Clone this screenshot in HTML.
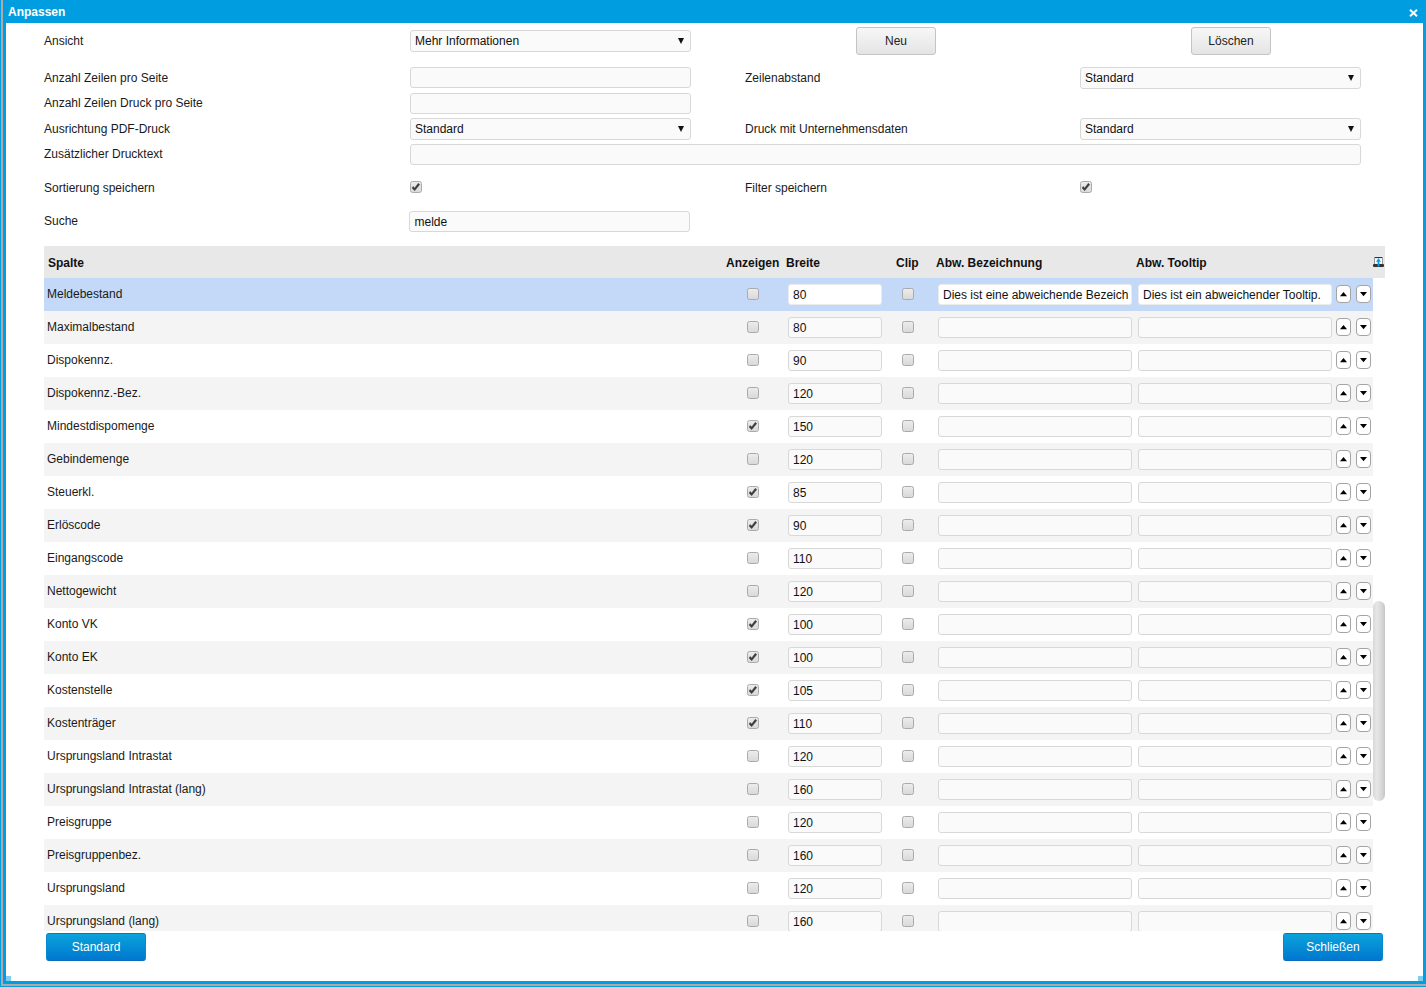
<!DOCTYPE html><html><head><meta charset="utf-8"><style>
*{box-sizing:border-box;margin:0;padding:0}
html,body{width:1426px;height:987px;overflow:hidden;background:#009ee0}
body{position:relative;font-family:"Liberation Sans",sans-serif;font-size:12px;color:#1a1a1a}
.a{position:absolute;white-space:nowrap}
.frameL{position:absolute;left:1px;top:0;width:2px;height:986px;background:#b3a8a4}
.frameB{position:absolute;left:1px;top:984px;width:1425px;height:2px;background:#b3a8a4}
.content{position:absolute;left:6px;top:23px;width:1417px;height:958px;background:#fff}
.title{position:absolute;left:8px;top:5px;color:#fff;font-weight:bold;font-size:12px;line-height:15px}
.lbl{position:absolute;white-space:nowrap;line-height:14px}
.inp{position:absolute;border:1px solid #d8d8d8;border-radius:3px;background:#fafafa;height:21px}
.sel{position:absolute;border:1px solid #d8d8d8;border-radius:3px;background:#fafafa;height:22px}
.sel span{position:absolute;left:4px;top:3px;line-height:14px;color:#111}
.sel i{position:absolute;right:6px;top:7px;width:0;height:0;border-left:3.5px solid transparent;border-right:3.5px solid transparent;border-top:6px solid #111}
.btn{position:absolute;height:28px;width:80px;border:1px solid #c4c4c4;border-radius:3px;background:linear-gradient(#f7f7f7,#e4e4e4);text-align:center;line-height:26px;color:#222}
.bbtn{position:absolute;height:28px;width:100px;border-radius:3px;border:1px solid #0a88cf;border-top-color:#0a74c2;border-bottom-color:#0a6cc0;background:linear-gradient(#0aa3dc,#0077cf);text-align:center;line-height:26px;color:#fff}
.cb{position:absolute;width:12px;height:12px;border:1px solid #aaaaaa;border-radius:2.5px;background:linear-gradient(#ececec,#d9d9d9)}
.row{position:absolute;left:44px;width:1329px;height:33px}
.ti{position:absolute;height:21px;border:1px solid #d8d8d8;border-radius:3px;background:#fafafa}
.ti span{position:absolute;left:4px;top:3px;line-height:14px;color:#111}
.ud{position:absolute;width:15px;height:18px;border:1px solid #a4a4a4;border-radius:4px;background:#fff}
.up{position:absolute;left:2.5px;top:5.5px;width:0;height:0;border-left:4px solid transparent;border-right:4px solid transparent;border-bottom:4.5px solid #000}
.dn{position:absolute;left:2.5px;top:5.5px;width:0;height:0;border-left:4px solid transparent;border-right:4px solid transparent;border-top:4.5px solid #000}
.hdr{position:absolute;left:44px;top:246px;width:1341px;height:32px;background:#e8e8e8}
.hdr b{position:absolute;top:10px;line-height:14px;color:#111}
</style></head><body>
<div class="frameL"></div><div class="frameB"></div>
<div class="title">Anpassen</div>
<svg class="a" style="left:1409px;top:9px" width="9" height="8" viewBox="0 0 9 8"><path d="M1 0.8 L8 7.2 M8 0.8 L1 7.2" stroke="#fff" stroke-width="2"/></svg>
<div class="content"></div>
<div class="a" style="left:6px;top:976px;width:5px;height:5px;background:#7fcdf0"></div>
<div class="a" style="left:1418px;top:976px;width:5px;height:5px;background:#7fcdf0"></div>
<div class="lbl" style="left:44px;top:34px">Ansicht</div>
<div class="sel" style="left:410px;top:30px;width:281px"><span>Mehr Informationen</span><i></i></div>
<div class="btn" style="left:856px;top:27px">Neu</div>
<div class="btn" style="left:1191px;top:27px">Löschen</div>
<div class="lbl" style="left:44px;top:71px">Anzahl Zeilen pro Seite</div>
<div class="inp" style="left:410px;top:67px;width:281px"></div>
<div class="lbl" style="left:745px;top:71px">Zeilenabstand</div>
<div class="sel" style="left:1080px;top:67px;width:281px"><span>Standard</span><i></i></div>
<div class="lbl" style="left:44px;top:96px">Anzahl Zeilen Druck pro Seite</div>
<div class="inp" style="left:410px;top:93px;width:281px"></div>
<div class="lbl" style="left:44px;top:122px">Ausrichtung PDF-Druck</div>
<div class="sel" style="left:410px;top:118px;width:281px"><span>Standard</span><i></i></div>
<div class="lbl" style="left:745px;top:122px">Druck mit Unternehmensdaten</div>
<div class="sel" style="left:1080px;top:118px;width:281px"><span>Standard</span><i></i></div>
<div class="lbl" style="left:44px;top:147px">Zusätzlicher Drucktext</div>
<div class="inp" style="left:410px;top:144px;width:951px"></div>
<div class="lbl" style="left:44px;top:181px">Sortierung speichern</div>
<div class="cb" style="left:410px;top:181px"><svg width="12" height="12" viewBox="0 0 12 12" style="position:absolute;left:-1px;top:-1px"><path d="M3.2 5.4 L4.66 7.0 L8.3 2.2 L9.8 3.5 L4.66 9.7 L2.0 7.0 Z" fill="#3c3c3c" stroke="#3c3c3c" stroke-width="0.4" stroke-linejoin="round"/></svg></div>
<div class="lbl" style="left:745px;top:181px">Filter speichern</div>
<div class="cb" style="left:1080px;top:181px"><svg width="12" height="12" viewBox="0 0 12 12" style="position:absolute;left:-1px;top:-1px"><path d="M3.2 5.4 L4.66 7.0 L8.3 2.2 L9.8 3.5 L4.66 9.7 L2.0 7.0 Z" fill="#3c3c3c" stroke="#3c3c3c" stroke-width="0.4" stroke-linejoin="round"/></svg></div>
<div class="lbl" style="left:44px;top:214px">Suche</div>
<div class="ti" style="left:409px;top:211px;width:281px;height:21px"><span style="left:4.5px;top:3px">melde</span></div>
<div class="hdr"><b style="left:4px">Spalte</b><b style="left:682px">Anzeigen</b><b style="left:742px">Breite</b><b style="left:852px">Clip</b><b style="left:892px">Abw. Bezeichnung</b><b style="left:1092px">Abw. Tooltip</b></div>
<svg class="a" style="left:1373px;top:257px" width="11" height="10" viewBox="0 0 11 10"><rect x="1" y="0" width="9" height="1.3" fill="#333"/><rect x="1" y="0" width="1" height="7" fill="#999"/><rect x="9" y="0" width="1" height="7" fill="#999"/><rect x="2" y="1.3" width="7" height="5" fill="#fff"/><rect x="0" y="7" width="11" height="3" rx="1" fill="#333"/><path d="M5.5 0.9 L8 4.8 L6.4 4.8 L6.4 9.5 L4.6 9.5 L4.6 4.8 L3 4.8 Z" fill="#0aa0e8"/></svg>
<div class="a" style="left:44px;top:278px;width:1341px;height:653px;overflow:hidden">
<div class="row" style="left:0;top:0px;background:#c4d9f7"><div class="lbl" style="left:3px;top:9px">Meldebestand</div><div class="cb" style="left:703px;top:10px"></div><div class="ti" style="left:744px;top:6px;width:94px;background:#fff;border-color:#ebebeb"><span>80</span></div><div class="cb" style="left:858px;top:10px"></div><div class="ti" style="left:894px;top:6px;width:194px;background:#fff;border-color:#ebebeb"><span>Dies ist eine abweichende Bezeich</span></div><div class="ti" style="left:1094px;top:6px;width:194px;background:#fff;border-color:#ebebeb"><span>Dies ist ein abweichender Tooltip.</span></div><div class="ud" style="left:1292px;top:7px"><svg width="15" height="18" style="position:absolute;left:-1px;top:-1px"><path d="M4 11.2 L11 11.2 L7.5 6.9 Z" fill="#000"/></svg></div><div class="ud" style="left:1312px;top:7px"><svg width="15" height="18" style="position:absolute;left:-1px;top:-1px"><path d="M4 6.9 L11 6.9 L7.5 11.2 Z" fill="#000"/></svg></div></div>
<div class="row" style="left:0;top:33px;background:#f4f4f4"><div class="lbl" style="left:3px;top:9px">Maximalbestand</div><div class="cb" style="left:703px;top:10px"></div><div class="ti" style="left:744px;top:6px;width:94px;"><span>80</span></div><div class="cb" style="left:858px;top:10px"></div><div class="ti" style="left:894px;top:6px;width:194px;"><span></span></div><div class="ti" style="left:1094px;top:6px;width:194px;"><span></span></div><div class="ud" style="left:1292px;top:7px"><svg width="15" height="18" style="position:absolute;left:-1px;top:-1px"><path d="M4 11.2 L11 11.2 L7.5 6.9 Z" fill="#000"/></svg></div><div class="ud" style="left:1312px;top:7px"><svg width="15" height="18" style="position:absolute;left:-1px;top:-1px"><path d="M4 6.9 L11 6.9 L7.5 11.2 Z" fill="#000"/></svg></div></div>
<div class="row" style="left:0;top:66px;background:#fff"><div class="lbl" style="left:3px;top:9px">Dispokennz.</div><div class="cb" style="left:703px;top:10px"></div><div class="ti" style="left:744px;top:6px;width:94px;"><span>90</span></div><div class="cb" style="left:858px;top:10px"></div><div class="ti" style="left:894px;top:6px;width:194px;"><span></span></div><div class="ti" style="left:1094px;top:6px;width:194px;"><span></span></div><div class="ud" style="left:1292px;top:7px"><svg width="15" height="18" style="position:absolute;left:-1px;top:-1px"><path d="M4 11.2 L11 11.2 L7.5 6.9 Z" fill="#000"/></svg></div><div class="ud" style="left:1312px;top:7px"><svg width="15" height="18" style="position:absolute;left:-1px;top:-1px"><path d="M4 6.9 L11 6.9 L7.5 11.2 Z" fill="#000"/></svg></div></div>
<div class="row" style="left:0;top:99px;background:#f4f4f4"><div class="lbl" style="left:3px;top:9px">Dispokennz.-Bez.</div><div class="cb" style="left:703px;top:10px"></div><div class="ti" style="left:744px;top:6px;width:94px;"><span>120</span></div><div class="cb" style="left:858px;top:10px"></div><div class="ti" style="left:894px;top:6px;width:194px;"><span></span></div><div class="ti" style="left:1094px;top:6px;width:194px;"><span></span></div><div class="ud" style="left:1292px;top:7px"><svg width="15" height="18" style="position:absolute;left:-1px;top:-1px"><path d="M4 11.2 L11 11.2 L7.5 6.9 Z" fill="#000"/></svg></div><div class="ud" style="left:1312px;top:7px"><svg width="15" height="18" style="position:absolute;left:-1px;top:-1px"><path d="M4 6.9 L11 6.9 L7.5 11.2 Z" fill="#000"/></svg></div></div>
<div class="row" style="left:0;top:132px;background:#fff"><div class="lbl" style="left:3px;top:9px">Mindestdispomenge</div><div class="cb" style="left:703px;top:10px"><svg width="12" height="12" viewBox="0 0 12 12" style="position:absolute;left:-1px;top:-1px"><path d="M3.2 5.4 L4.66 7.0 L8.3 2.2 L9.8 3.5 L4.66 9.7 L2.0 7.0 Z" fill="#3c3c3c" stroke="#3c3c3c" stroke-width="0.4" stroke-linejoin="round"/></svg></div><div class="ti" style="left:744px;top:6px;width:94px;"><span>150</span></div><div class="cb" style="left:858px;top:10px"></div><div class="ti" style="left:894px;top:6px;width:194px;"><span></span></div><div class="ti" style="left:1094px;top:6px;width:194px;"><span></span></div><div class="ud" style="left:1292px;top:7px"><svg width="15" height="18" style="position:absolute;left:-1px;top:-1px"><path d="M4 11.2 L11 11.2 L7.5 6.9 Z" fill="#000"/></svg></div><div class="ud" style="left:1312px;top:7px"><svg width="15" height="18" style="position:absolute;left:-1px;top:-1px"><path d="M4 6.9 L11 6.9 L7.5 11.2 Z" fill="#000"/></svg></div></div>
<div class="row" style="left:0;top:165px;background:#f4f4f4"><div class="lbl" style="left:3px;top:9px">Gebindemenge</div><div class="cb" style="left:703px;top:10px"></div><div class="ti" style="left:744px;top:6px;width:94px;"><span>120</span></div><div class="cb" style="left:858px;top:10px"></div><div class="ti" style="left:894px;top:6px;width:194px;"><span></span></div><div class="ti" style="left:1094px;top:6px;width:194px;"><span></span></div><div class="ud" style="left:1292px;top:7px"><svg width="15" height="18" style="position:absolute;left:-1px;top:-1px"><path d="M4 11.2 L11 11.2 L7.5 6.9 Z" fill="#000"/></svg></div><div class="ud" style="left:1312px;top:7px"><svg width="15" height="18" style="position:absolute;left:-1px;top:-1px"><path d="M4 6.9 L11 6.9 L7.5 11.2 Z" fill="#000"/></svg></div></div>
<div class="row" style="left:0;top:198px;background:#fff"><div class="lbl" style="left:3px;top:9px">Steuerkl.</div><div class="cb" style="left:703px;top:10px"><svg width="12" height="12" viewBox="0 0 12 12" style="position:absolute;left:-1px;top:-1px"><path d="M3.2 5.4 L4.66 7.0 L8.3 2.2 L9.8 3.5 L4.66 9.7 L2.0 7.0 Z" fill="#3c3c3c" stroke="#3c3c3c" stroke-width="0.4" stroke-linejoin="round"/></svg></div><div class="ti" style="left:744px;top:6px;width:94px;"><span>85</span></div><div class="cb" style="left:858px;top:10px"></div><div class="ti" style="left:894px;top:6px;width:194px;"><span></span></div><div class="ti" style="left:1094px;top:6px;width:194px;"><span></span></div><div class="ud" style="left:1292px;top:7px"><svg width="15" height="18" style="position:absolute;left:-1px;top:-1px"><path d="M4 11.2 L11 11.2 L7.5 6.9 Z" fill="#000"/></svg></div><div class="ud" style="left:1312px;top:7px"><svg width="15" height="18" style="position:absolute;left:-1px;top:-1px"><path d="M4 6.9 L11 6.9 L7.5 11.2 Z" fill="#000"/></svg></div></div>
<div class="row" style="left:0;top:231px;background:#f4f4f4"><div class="lbl" style="left:3px;top:9px">Erlöscode</div><div class="cb" style="left:703px;top:10px"><svg width="12" height="12" viewBox="0 0 12 12" style="position:absolute;left:-1px;top:-1px"><path d="M3.2 5.4 L4.66 7.0 L8.3 2.2 L9.8 3.5 L4.66 9.7 L2.0 7.0 Z" fill="#3c3c3c" stroke="#3c3c3c" stroke-width="0.4" stroke-linejoin="round"/></svg></div><div class="ti" style="left:744px;top:6px;width:94px;"><span>90</span></div><div class="cb" style="left:858px;top:10px"></div><div class="ti" style="left:894px;top:6px;width:194px;"><span></span></div><div class="ti" style="left:1094px;top:6px;width:194px;"><span></span></div><div class="ud" style="left:1292px;top:7px"><svg width="15" height="18" style="position:absolute;left:-1px;top:-1px"><path d="M4 11.2 L11 11.2 L7.5 6.9 Z" fill="#000"/></svg></div><div class="ud" style="left:1312px;top:7px"><svg width="15" height="18" style="position:absolute;left:-1px;top:-1px"><path d="M4 6.9 L11 6.9 L7.5 11.2 Z" fill="#000"/></svg></div></div>
<div class="row" style="left:0;top:264px;background:#fff"><div class="lbl" style="left:3px;top:9px">Eingangscode</div><div class="cb" style="left:703px;top:10px"></div><div class="ti" style="left:744px;top:6px;width:94px;"><span>110</span></div><div class="cb" style="left:858px;top:10px"></div><div class="ti" style="left:894px;top:6px;width:194px;"><span></span></div><div class="ti" style="left:1094px;top:6px;width:194px;"><span></span></div><div class="ud" style="left:1292px;top:7px"><svg width="15" height="18" style="position:absolute;left:-1px;top:-1px"><path d="M4 11.2 L11 11.2 L7.5 6.9 Z" fill="#000"/></svg></div><div class="ud" style="left:1312px;top:7px"><svg width="15" height="18" style="position:absolute;left:-1px;top:-1px"><path d="M4 6.9 L11 6.9 L7.5 11.2 Z" fill="#000"/></svg></div></div>
<div class="row" style="left:0;top:297px;background:#f4f4f4"><div class="lbl" style="left:3px;top:9px">Nettogewicht</div><div class="cb" style="left:703px;top:10px"></div><div class="ti" style="left:744px;top:6px;width:94px;"><span>120</span></div><div class="cb" style="left:858px;top:10px"></div><div class="ti" style="left:894px;top:6px;width:194px;"><span></span></div><div class="ti" style="left:1094px;top:6px;width:194px;"><span></span></div><div class="ud" style="left:1292px;top:7px"><svg width="15" height="18" style="position:absolute;left:-1px;top:-1px"><path d="M4 11.2 L11 11.2 L7.5 6.9 Z" fill="#000"/></svg></div><div class="ud" style="left:1312px;top:7px"><svg width="15" height="18" style="position:absolute;left:-1px;top:-1px"><path d="M4 6.9 L11 6.9 L7.5 11.2 Z" fill="#000"/></svg></div></div>
<div class="row" style="left:0;top:330px;background:#fff"><div class="lbl" style="left:3px;top:9px">Konto VK</div><div class="cb" style="left:703px;top:10px"><svg width="12" height="12" viewBox="0 0 12 12" style="position:absolute;left:-1px;top:-1px"><path d="M3.2 5.4 L4.66 7.0 L8.3 2.2 L9.8 3.5 L4.66 9.7 L2.0 7.0 Z" fill="#3c3c3c" stroke="#3c3c3c" stroke-width="0.4" stroke-linejoin="round"/></svg></div><div class="ti" style="left:744px;top:6px;width:94px;"><span>100</span></div><div class="cb" style="left:858px;top:10px"></div><div class="ti" style="left:894px;top:6px;width:194px;"><span></span></div><div class="ti" style="left:1094px;top:6px;width:194px;"><span></span></div><div class="ud" style="left:1292px;top:7px"><svg width="15" height="18" style="position:absolute;left:-1px;top:-1px"><path d="M4 11.2 L11 11.2 L7.5 6.9 Z" fill="#000"/></svg></div><div class="ud" style="left:1312px;top:7px"><svg width="15" height="18" style="position:absolute;left:-1px;top:-1px"><path d="M4 6.9 L11 6.9 L7.5 11.2 Z" fill="#000"/></svg></div></div>
<div class="row" style="left:0;top:363px;background:#f4f4f4"><div class="lbl" style="left:3px;top:9px">Konto EK</div><div class="cb" style="left:703px;top:10px"><svg width="12" height="12" viewBox="0 0 12 12" style="position:absolute;left:-1px;top:-1px"><path d="M3.2 5.4 L4.66 7.0 L8.3 2.2 L9.8 3.5 L4.66 9.7 L2.0 7.0 Z" fill="#3c3c3c" stroke="#3c3c3c" stroke-width="0.4" stroke-linejoin="round"/></svg></div><div class="ti" style="left:744px;top:6px;width:94px;"><span>100</span></div><div class="cb" style="left:858px;top:10px"></div><div class="ti" style="left:894px;top:6px;width:194px;"><span></span></div><div class="ti" style="left:1094px;top:6px;width:194px;"><span></span></div><div class="ud" style="left:1292px;top:7px"><svg width="15" height="18" style="position:absolute;left:-1px;top:-1px"><path d="M4 11.2 L11 11.2 L7.5 6.9 Z" fill="#000"/></svg></div><div class="ud" style="left:1312px;top:7px"><svg width="15" height="18" style="position:absolute;left:-1px;top:-1px"><path d="M4 6.9 L11 6.9 L7.5 11.2 Z" fill="#000"/></svg></div></div>
<div class="row" style="left:0;top:396px;background:#fff"><div class="lbl" style="left:3px;top:9px">Kostenstelle</div><div class="cb" style="left:703px;top:10px"><svg width="12" height="12" viewBox="0 0 12 12" style="position:absolute;left:-1px;top:-1px"><path d="M3.2 5.4 L4.66 7.0 L8.3 2.2 L9.8 3.5 L4.66 9.7 L2.0 7.0 Z" fill="#3c3c3c" stroke="#3c3c3c" stroke-width="0.4" stroke-linejoin="round"/></svg></div><div class="ti" style="left:744px;top:6px;width:94px;"><span>105</span></div><div class="cb" style="left:858px;top:10px"></div><div class="ti" style="left:894px;top:6px;width:194px;"><span></span></div><div class="ti" style="left:1094px;top:6px;width:194px;"><span></span></div><div class="ud" style="left:1292px;top:7px"><svg width="15" height="18" style="position:absolute;left:-1px;top:-1px"><path d="M4 11.2 L11 11.2 L7.5 6.9 Z" fill="#000"/></svg></div><div class="ud" style="left:1312px;top:7px"><svg width="15" height="18" style="position:absolute;left:-1px;top:-1px"><path d="M4 6.9 L11 6.9 L7.5 11.2 Z" fill="#000"/></svg></div></div>
<div class="row" style="left:0;top:429px;background:#f4f4f4"><div class="lbl" style="left:3px;top:9px">Kostenträger</div><div class="cb" style="left:703px;top:10px"><svg width="12" height="12" viewBox="0 0 12 12" style="position:absolute;left:-1px;top:-1px"><path d="M3.2 5.4 L4.66 7.0 L8.3 2.2 L9.8 3.5 L4.66 9.7 L2.0 7.0 Z" fill="#3c3c3c" stroke="#3c3c3c" stroke-width="0.4" stroke-linejoin="round"/></svg></div><div class="ti" style="left:744px;top:6px;width:94px;"><span>110</span></div><div class="cb" style="left:858px;top:10px"></div><div class="ti" style="left:894px;top:6px;width:194px;"><span></span></div><div class="ti" style="left:1094px;top:6px;width:194px;"><span></span></div><div class="ud" style="left:1292px;top:7px"><svg width="15" height="18" style="position:absolute;left:-1px;top:-1px"><path d="M4 11.2 L11 11.2 L7.5 6.9 Z" fill="#000"/></svg></div><div class="ud" style="left:1312px;top:7px"><svg width="15" height="18" style="position:absolute;left:-1px;top:-1px"><path d="M4 6.9 L11 6.9 L7.5 11.2 Z" fill="#000"/></svg></div></div>
<div class="row" style="left:0;top:462px;background:#fff"><div class="lbl" style="left:3px;top:9px">Ursprungsland Intrastat</div><div class="cb" style="left:703px;top:10px"></div><div class="ti" style="left:744px;top:6px;width:94px;"><span>120</span></div><div class="cb" style="left:858px;top:10px"></div><div class="ti" style="left:894px;top:6px;width:194px;"><span></span></div><div class="ti" style="left:1094px;top:6px;width:194px;"><span></span></div><div class="ud" style="left:1292px;top:7px"><svg width="15" height="18" style="position:absolute;left:-1px;top:-1px"><path d="M4 11.2 L11 11.2 L7.5 6.9 Z" fill="#000"/></svg></div><div class="ud" style="left:1312px;top:7px"><svg width="15" height="18" style="position:absolute;left:-1px;top:-1px"><path d="M4 6.9 L11 6.9 L7.5 11.2 Z" fill="#000"/></svg></div></div>
<div class="row" style="left:0;top:495px;background:#f4f4f4"><div class="lbl" style="left:3px;top:9px">Ursprungsland Intrastat (lang)</div><div class="cb" style="left:703px;top:10px"></div><div class="ti" style="left:744px;top:6px;width:94px;"><span>160</span></div><div class="cb" style="left:858px;top:10px"></div><div class="ti" style="left:894px;top:6px;width:194px;"><span></span></div><div class="ti" style="left:1094px;top:6px;width:194px;"><span></span></div><div class="ud" style="left:1292px;top:7px"><svg width="15" height="18" style="position:absolute;left:-1px;top:-1px"><path d="M4 11.2 L11 11.2 L7.5 6.9 Z" fill="#000"/></svg></div><div class="ud" style="left:1312px;top:7px"><svg width="15" height="18" style="position:absolute;left:-1px;top:-1px"><path d="M4 6.9 L11 6.9 L7.5 11.2 Z" fill="#000"/></svg></div></div>
<div class="row" style="left:0;top:528px;background:#fff"><div class="lbl" style="left:3px;top:9px">Preisgruppe</div><div class="cb" style="left:703px;top:10px"></div><div class="ti" style="left:744px;top:6px;width:94px;"><span>120</span></div><div class="cb" style="left:858px;top:10px"></div><div class="ti" style="left:894px;top:6px;width:194px;"><span></span></div><div class="ti" style="left:1094px;top:6px;width:194px;"><span></span></div><div class="ud" style="left:1292px;top:7px"><svg width="15" height="18" style="position:absolute;left:-1px;top:-1px"><path d="M4 11.2 L11 11.2 L7.5 6.9 Z" fill="#000"/></svg></div><div class="ud" style="left:1312px;top:7px"><svg width="15" height="18" style="position:absolute;left:-1px;top:-1px"><path d="M4 6.9 L11 6.9 L7.5 11.2 Z" fill="#000"/></svg></div></div>
<div class="row" style="left:0;top:561px;background:#f4f4f4"><div class="lbl" style="left:3px;top:9px">Preisgruppenbez.</div><div class="cb" style="left:703px;top:10px"></div><div class="ti" style="left:744px;top:6px;width:94px;"><span>160</span></div><div class="cb" style="left:858px;top:10px"></div><div class="ti" style="left:894px;top:6px;width:194px;"><span></span></div><div class="ti" style="left:1094px;top:6px;width:194px;"><span></span></div><div class="ud" style="left:1292px;top:7px"><svg width="15" height="18" style="position:absolute;left:-1px;top:-1px"><path d="M4 11.2 L11 11.2 L7.5 6.9 Z" fill="#000"/></svg></div><div class="ud" style="left:1312px;top:7px"><svg width="15" height="18" style="position:absolute;left:-1px;top:-1px"><path d="M4 6.9 L11 6.9 L7.5 11.2 Z" fill="#000"/></svg></div></div>
<div class="row" style="left:0;top:594px;background:#fff"><div class="lbl" style="left:3px;top:9px">Ursprungsland</div><div class="cb" style="left:703px;top:10px"></div><div class="ti" style="left:744px;top:6px;width:94px;"><span>120</span></div><div class="cb" style="left:858px;top:10px"></div><div class="ti" style="left:894px;top:6px;width:194px;"><span></span></div><div class="ti" style="left:1094px;top:6px;width:194px;"><span></span></div><div class="ud" style="left:1292px;top:7px"><svg width="15" height="18" style="position:absolute;left:-1px;top:-1px"><path d="M4 11.2 L11 11.2 L7.5 6.9 Z" fill="#000"/></svg></div><div class="ud" style="left:1312px;top:7px"><svg width="15" height="18" style="position:absolute;left:-1px;top:-1px"><path d="M4 6.9 L11 6.9 L7.5 11.2 Z" fill="#000"/></svg></div></div>
<div class="row" style="left:0;top:627px;background:#f4f4f4"><div class="lbl" style="left:3px;top:9px">Ursprungsland (lang)</div><div class="cb" style="left:703px;top:10px"></div><div class="ti" style="left:744px;top:6px;width:94px;"><span>160</span></div><div class="cb" style="left:858px;top:10px"></div><div class="ti" style="left:894px;top:6px;width:194px;"><span></span></div><div class="ti" style="left:1094px;top:6px;width:194px;"><span></span></div><div class="ud" style="left:1292px;top:7px"><svg width="15" height="18" style="position:absolute;left:-1px;top:-1px"><path d="M4 11.2 L11 11.2 L7.5 6.9 Z" fill="#000"/></svg></div><div class="ud" style="left:1312px;top:7px"><svg width="15" height="18" style="position:absolute;left:-1px;top:-1px"><path d="M4 6.9 L11 6.9 L7.5 11.2 Z" fill="#000"/></svg></div></div>
</div>
<div class="a" style="left:1373px;top:601px;width:12px;height:200px;border-radius:6px;background:linear-gradient(90deg,#d8d8d8,#e6e6e6 30%,#d8d8d8 70%,#c6c6c6)"></div>
<div class="bbtn" style="left:46px;top:933px">Standard</div>
<div class="bbtn" style="left:1283px;top:933px">Schließen</div>
</body></html>
